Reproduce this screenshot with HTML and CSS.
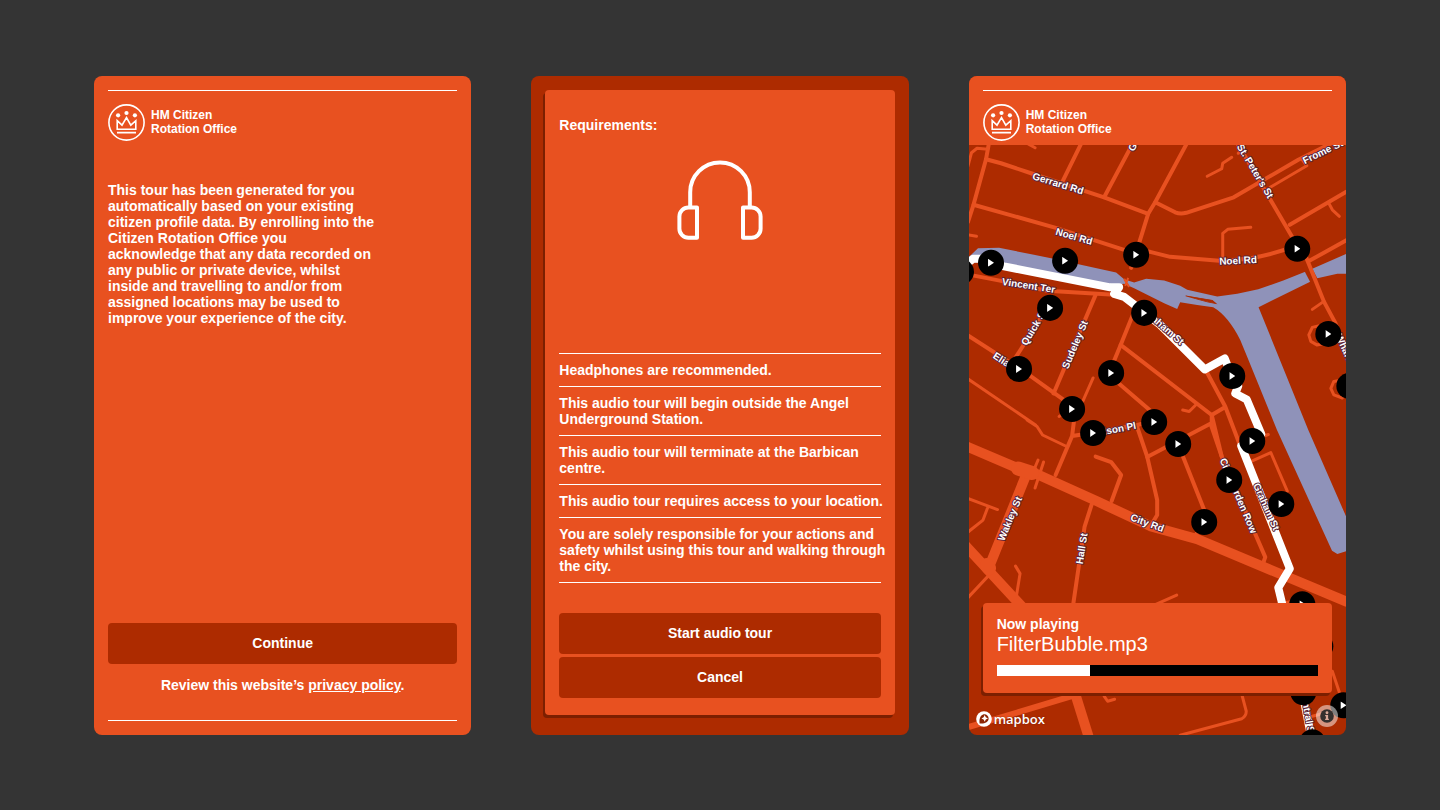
FILE: index.html
```
<!DOCTYPE html>
<html lang="en">
<head>
<meta charset="utf-8">
<meta name="viewport" content="width=device-width, initial-scale=1">
<title>HM Citizen Rotation Office</title>
<link rel="stylesheet" href="styles.css">
</head>
<body>
<svg class="sprite" aria-hidden="true">
  <symbol id="crown" viewBox="0 0 37 37">
    <g fill="none" stroke="#fff" stroke-width="1.6">
      <circle cx="18.5" cy="18.5" r="17.6"/>
      <path d="M9.2 16.7V25.2H27.8V16.7L22.8 21.2L18.5 13.6L14 21.2Z"/>
      <path d="M9 28.6H28"/>
    </g>
    <g fill="#fff"><circle cx="10.1" cy="11.3" r="2.1"/><circle cx="18.5" cy="9" r="2.1"/><circle cx="26.9" cy="11.3" r="2.1"/></g>
  </symbol>
</svg>

<main class="screens">
  <section class="screen intro">
    <header class="brand">
      <svg class="brand-mark" aria-hidden="true"><use href="#crown"/></svg>
      <span class="brand-name">HM Citizen<br>Rotation Office</span>
    </header>
    <p class="intro-text">This tour has been generated for you automatically based on your existing citizen profile data. By enrolling into the Citizen Rotation Office you acknowledge that any data recorded on any public or private device, whilst inside and travelling to and/or from assigned locations may be used to improve your experience of the city.</p>
    <footer class="intro-footer">
      <button class="button" type="button">Continue</button>
      <p class="privacy">Review this website’s <a href="#privacy">privacy policy</a>.</p>
    </footer>
  </section>

  <section class="screen requirements">
    <div class="panel sheet">
      <h2 class="title">Requirements:</h2>
      <svg class="headphones" viewBox="0 0 86 80" fill="none" stroke="#fff" stroke-width="4" stroke-linejoin="round" aria-hidden="true">
        <path d="M13.2 47V32.2A29.8 29.8 0 0 1 72.8 32.2V47"/>
        <path d="M20 47.5H11.5A9 9 0 0 0 2.4 56.5V68.7A9 9 0 0 0 11.5 77.7H20Z"/>
        <path d="M66 47.5H74.5A9 9 0 0 1 83.6 56.5V68.7A9 9 0 0 1 74.5 77.7H66Z"/>
      </svg>
      <ul class="list">
        <li><p>Headphones are recommended.</p></li>
        <li><p>This audio tour will begin outside the Angel Underground Station.</p></li>
        <li><p>This audio tour will terminate at the Barbican centre.</p></li>
        <li><p>This audio tour requires access to your location.</p></li>
        <li><p>You are solely responsible for your actions and safety whilst using this tour and walking through the city.</p></li>
      </ul>
      <div class="actions">
        <button class="button" type="button">Start audio tour</button>
        <button class="button" type="button">Cancel</button>
      </div>
    </div>
  </section>

  <section class="screen tour">
    <div class="tour-header">
      <header class="brand">
        <svg class="brand-mark" aria-hidden="true"><use href="#crown"/></svg>
        <span class="brand-name">HM Citizen<br>Rotation Office</span>
      </header>
    </div>
    <div class="map">
      <svg class="map-canvas" viewBox="969 145 377 590" preserveAspectRatio="xMidYMid slice">
        <!-- canal and basin -->
        <path class="water" d="M968 258L978 248.300L999 248L1051 258.300L1116 272.700L1124 279.300L1134 282.700L1146 279L1164 280.700L1180 286L1187 290L1217 296.700L1237 294L1258 289.300L1283 280.700L1308 270.700L1346 254V274H1337L1317 278.300L1258.300 307.300L1308 430L1346 517V551L1337 554L1331.700 550.700L1276.700 430L1247 357L1240 340Q1228 316 1213 307.300L1197 305L1180 302.300L1177 309L1164 303.300L1134 288.300L1124 284L1110 286L1004 264L968 262Z"/>
        <path class="islet" d="M1185.500 296L1200 298.500L1212 300.500L1215.500 303.500L1207 302L1198 299.500Z"/>
        <path class="lock" d="M1124 279L1129 287M1128 278L1125 286"/>
        <path class="bridge" d="M1306 266L1319 291"/>

        <!-- minor streets -->
        <g class="road lane">
          <path d="M968 166L971.500 153L977 148.500L988 149.500"/>
          <path d="M1026 143L1035 148"/>
          <path d="M968 235L976.500 236.500"/>
          <path d="M1270 187.500L1306.500 166L1302 160"/>
          <path d="M1207 176.500L1221.500 169L1222.500 163.500L1231.500 157.500M1238 153.500L1242 150.500"/>
          <path d="M1328.500 203.500L1332 210L1339 216.500"/>
          <path d="M1222.500 259V233.500L1227.500 229.500L1250.500 227.500"/>
          <path d="M1323.500 301.500L1312 309.500"/>
          <path d="M1318 326L1312 327.500L1308.500 335L1310.500 341.500L1316.500 345L1322 344"/>
          <path d="M1342 380L1333.500 381.500L1330.500 388.500L1333.500 395L1342 398"/>
          <path d="M968 379L1035.500 425M1027 420L1037 426.500L1042.500 435L1065.500 446"/>
          <path d="M1093 378L1082 403M1059 416.500L1071 409"/>
          <path d="M1182.500 410L1189 411.500L1196.500 404"/>
          <path d="M1251.500 461L1270.500 452.500L1287 491M1255 439L1268 434.500"/>
          <path d="M1038 460L1033 472M1043.500 462L1035 488"/>
          <path d="M968 498.500L997.500 509.500M987.500 508L983 520L968 532"/>
          <path d="M989 575L968 597.500"/>
          <path d="M1015.500 566L1020 573.500L1016.500 595"/>
          <path d="M1154 605L1176.500 595M1273 605L1292 601"/>
          <path d="M1104 696L1107.500 701L1114.500 699"/>
          <path d="M1241.500 694L1246 711Q1246 716 1241.500 718.500L1180 735"/>
          <path d="M1332 671L1340 695M1312 716L1331 711"/>
        </g>
        <!-- streets -->
        <g class="road street">
          <path d="M989 143L986 159.500L973.500 205L968 222"/>
          <path d="M986 159.500L1001 163.500L1031 173.500L1104 197.500L1148 214"/>
          <path d="M1081.500 143L1062.500 181.500M1133 143L1104 197.500"/>
          <path d="M973.500 205L1057.500 228.500L1124 250L1150 252L1170 257L1219 261Q1262 260 1297 245"/>
          <path d="M1187 143L1155 202.500L1148 214L1139 243L1131 268"/>
          <path d="M1155 202.500L1175 212.500Q1180 214.500 1186 213L1233.500 197.500L1298 160L1346 136"/>
          <path d="M1238 145L1297 246L1306 258L1323.500 301.500L1335 323L1348 358"/>
          <path d="M1289.500 225L1346 192M1309 261L1346 240.500"/>
          <path d="M970 275L1001 281L1047 291L1064 292L1114 295"/>
          <path d="M1044 313L1014 360M1095.500 295L1053.500 393.500"/>
          <path d="M968 335.500L1024 371.500L1072 406"/>
          <path d="M1132 316.500L1120.500 345L1111 368"/>
          <path d="M1120.500 345L1211.500 415L1221.500 456.500"/>
          <path d="M1071 408L1074 420L1072 436L1055.500 475M1072 436L1092 433L1137 425L1153 421"/>
          <path d="M1110 376L1153 413"/>
          <path d="M1206 371L1225 406.500L1240 446M1225 407L1211.500 415V423L1147 457"/>
          <path d="M1210.500 424L1221.500 456.500L1265 557L1261.500 567"/>
          <path d="M1181 452L1204 510M1203 522L1195 536"/>
          <path d="M1137 427L1147 456.500L1157 500V515L1151 525"/>
          <path d="M1095.500 456.500L1111 462L1121 475L1111.500 501"/>
          <path d="M1092.500 501.500L1084.500 526.500L1073 605"/>
        </g>
        <!-- main roads -->
        <g class="road avenue">
          <path d="M968 447L1014 466.500L1031 471.500L1097.500 501.500L1150 526L1197 539L1346 601.500"/>
          <path d="M1026 475L989 567M966 546L1028 613"/>
          <path d="M1074 690L1089 738"/>
        </g>
        <path class="road junction" d="M1018 468.500L1032 473M987 565L989 568"/>
        <path class="road link" d="M968 727L1075 695"/>

        <!-- walking route -->
        <path class="route" d="M968 263L973 259H982L990 263L1004 266.500L1110 287.500H1119L1114 294L1124 297L1137 307L1160 325L1204.500 369.500L1224.500 358.500L1231 375L1238 386L1235 393.500L1246.500 399.500L1261 434L1252 441L1241 446L1289.500 568.500L1278 587.500L1282 604"/>
        <path class="route" d="M1302 692L1311 737"/>

        <!-- street names -->
        <g class="labels">
          <text transform="translate(1057 187) rotate(17)">Gerrard Rd</text>
          <text transform="translate(1073 240) rotate(16)">Noel Rd</text>
          <text transform="translate(1238 264) rotate(-3)">Noel Rd</text>
          <text transform="translate(1028 289) rotate(9)">Vincent Ter</text>
          <text transform="translate(1078 346) rotate(-67)">Sudeley St</text>
          <text transform="translate(1037 329) rotate(-59)">Quick St</text>
          <text transform="translate(1005 366) rotate(33)">Elia St</text>
          <text transform="translate(1161 329) rotate(41)">Graham St</text>
          <text transform="translate(1344 356) rotate(66)">Wharf Rd</text>
          <text transform="translate(1114 433) rotate(-11)">Nelson Pl</text>
          <text transform="translate(1013 520) rotate(-67)">Wakley St</text>
          <text transform="translate(1085 549) rotate(-81)">Hall St</text>
          <text transform="translate(1146 526) rotate(20)">City Rd</text>
          <text transform="translate(1235 497) rotate(67)">City Garden Row</text>
          <text transform="translate(1263 508) rotate(66)">Graham St</text>
          <text transform="translate(1252 173) rotate(59)">St. Peter's St</text>
          <text transform="translate(1324 155) rotate(-26)">Frome St</text>
          <text transform="translate(1147 127) rotate(-62)">Grantbridge</text>
          <text transform="translate(1304 713) rotate(80)">Central St</text>
        </g>

        <foreignObject x="969" y="145" width="377" height="590">
          <div class="pins">
            <button class="pin" aria-label="Play stop 1" style="left:-8px;top:127px"></button>
            <button class="pin" aria-label="Play stop 2" style="left:22px;top:118px"></button>
            <button class="pin" aria-label="Play stop 3" style="left:96px;top:116px"></button>
            <button class="pin" aria-label="Play stop 4" style="left:167px;top:110px"></button>
            <button class="pin" aria-label="Play stop 5" style="left:328px;top:104px"></button>
            <button class="pin" aria-label="Play stop 6" style="left:81px;top:163px"></button>
            <button class="pin" aria-label="Play stop 7" style="left:175px;top:168px"></button>
            <button class="pin" aria-label="Play stop 8" style="left:359px;top:189px"></button>
            <button class="pin" aria-label="Play stop 9" style="left:50px;top:224px"></button>
            <button class="pin" aria-label="Play stop 10" style="left:142px;top:228px"></button>
            <button class="pin" aria-label="Play stop 11" style="left:263px;top:231px"></button>
            <button class="pin" aria-label="Play stop 12" style="left:380px;top:241px"></button>
            <button class="pin" aria-label="Play stop 13" style="left:103px;top:264px"></button>
            <button class="pin" aria-label="Play stop 14" style="left:124px;top:288px"></button>
            <button class="pin" aria-label="Play stop 15" style="left:185px;top:277px"></button>
            <button class="pin" aria-label="Play stop 16" style="left:209px;top:299px"></button>
            <button class="pin" aria-label="Play stop 17" style="left:283px;top:296px"></button>
            <button class="pin" aria-label="Play stop 18" style="left:260px;top:335px"></button>
            <button class="pin" aria-label="Play stop 19" style="left:312px;top:359px"></button>
            <button class="pin" aria-label="Play stop 20" style="left:235px;top:377px"></button>
            <button class="pin" aria-label="Play stop 21" style="left:333px;top:459px"></button>
            <button class="pin" aria-label="Play stop 22" style="left:351px;top:501px"></button>
            <button class="pin" aria-label="Play stop 23" style="left:334px;top:547px"></button>
            <button class="pin" aria-label="Play stop 24" style="left:374px;top:560px"></button>
            <button class="pin" aria-label="Play stop 25" style="left:343px;top:597px"></button>
          </div>
        </foreignObject>
      </svg>

      <div class="map-overlay">
        <div class="panel player">
          <label class="title" for="track">Now playing</label>
          <span class="track-name">FilterBubble.mp3</span>
          <progress class="track" id="track" value="29" max="100"></progress>
        </div>
        <div class="attribution">
          <a class="mapbox" href="#mapbox">
            <svg class="mapbox-mark" viewBox="0 0 16 16" aria-hidden="true">
              <circle cx="8" cy="8" r="7.800" fill="#fff"/>
              <path d="M3.600 12.400C3 8.500 4 5 6.700 3.700C9.500 2.500 12.600 4.500 12.600 7.500C12.600 11.500 8 13 3.600 12.400Z" fill="#8c2605"/>
              <path d="M8.700 4L9.800 6.300L12 7.400L9.800 8.500L8.700 10.800L7.600 8.500L5.400 7.400L7.600 6.300Z" fill="#fff"/>
            </svg>
            <span>mapbox</span>
          </a>
          <button class="info" type="button" aria-label="About this map">
            <svg class="info-icon" viewBox="0 0 20 20" aria-hidden="true">
              <circle cx="10" cy="10" r="6.200" fill="#35302e"/>
              <circle cx="10" cy="7" r="1.300" fill="#d9a898"/>
              <path d="M8.300 9H11V12.500H11.700V13.700H8.300V12.500H9V10.200H8.300Z" fill="#d9a898"/>
            </svg>
          </button>
        </div>
      </div>
    </div>
  </section>
</main>
</body>
</html>
```
FILE: styles.css
```
:root {
  --orange: #e85120;
  --rust: #ad2b00;
  --shadow: #7c1f00;
}

* { box-sizing: border-box; }

body {
  margin: 0;
  background: #343434;
  color: #fff;
  font: bold 14px/16px "Liberation Sans", Arial, sans-serif;
}

p, h2, ul { margin: 0; padding: 0; }

button { font: inherit; color: inherit; border: 0; cursor: pointer; }

.sprite { display: none; }

.screens {
  display: grid;
  grid-template-columns: repeat(3, 1fr);
  gap: 60px;
  min-height: 100vh;
  padding: 76px 94px 75px;
}

.screen {
  display: flex;
  flex-direction: column;
  border-radius: 8px;
  background: var(--orange);
  overflow: hidden;
}

.brand {
  display: flex;
  align-items: center;
  gap: 6px;
  padding-top: 13px;
  border-top: 1px solid #fff;
}

.brand-mark { width: 37px; height: 37px; flex: none; }

.brand-name { padding-bottom: 2px; font-size: 12px; line-height: 14px; }

.button {
  display: block;
  width: 100%;
  padding: 12px;
  line-height: 17px;
  border-radius: 4px;
  background: var(--rust);
}

.panel {
  padding: 14px;
  border-radius: 4px;
  background: var(--orange);
  box-shadow: -2px 3px 0 var(--shadow);
}

.title { font-size: 14px; line-height: 16px; }

/* Introduction */
.intro { padding: 14px; }

.intro-text { max-width: 268px; margin-top: 41px; }

.intro-footer { margin-top: auto; border-bottom: 1px solid #fff; }

.privacy { padding: 13px 0 27px; text-align: center; }

.privacy a { color: inherit; }

/* Requirements */
.requirements { padding: 14px 14px 20px; background: var(--rust); }

.sheet { display: flex; flex-direction: column; flex: 1; padding: 27px 14px 17px; }

.headphones { width: 86px; height: 80px; margin: 27px auto; }

.list {
  margin-top: auto;
  list-style: none;
  border-top: 1px solid #fff;
}

.list li { padding: 8px 0; border-bottom: 1px solid #fff; }

/* Lets long lines run slightly past the rules, into the panel's padding */
.list p { margin-right: -10px; }

.actions { display: grid; gap: 3px; margin-top: 30px; }

/* Tour map */
.tour { background: var(--rust); }

.tour-header { padding: 14px 14px 4px; background: var(--orange); }

.map { display: flex; flex: 1; position: relative; overflow: hidden; }

.map-canvas { position: absolute; inset: 0; width: 100%; height: 100%; }

.map-overlay {
  position: relative;
  display: flex;
  flex-direction: column;
  justify-content: flex-end;
  flex: 1;
  pointer-events: none;
}

.map-overlay > * { pointer-events: auto; }

.water { fill: #8f92b9; }
.islet { fill: var(--rust); stroke: var(--rust); stroke-width: 1; }
.lock { fill: none; stroke: var(--orange); stroke-width: 2; }
.bridge { fill: none; stroke: var(--rust); stroke-width: 8; }

.road { fill: none; stroke: var(--orange); stroke-linecap: round; stroke-linejoin: round; }
.lane { stroke-width: 3; }
.street { stroke-width: 4; }
.link { stroke-width: 6; }
.avenue { stroke-width: 10; }
.junction { stroke-width: 14; }

.route { fill: none; stroke: #fff; stroke-width: 8; stroke-linejoin: round; }

.labels {
  fill: #fff;
  stroke: #5a2436;
  stroke-width: 2;
  stroke-linejoin: round;
  paint-order: stroke;
  font-size: 10px;
  text-anchor: middle;
}

.pins { position: relative; width: 100%; height: 100%; }

.pin {
  position: absolute;
  width: 26px;
  height: 26px;
  margin: -13px;
  padding: 0;
  border-radius: 50%;
  background: #000;
}

.pin::before {
  content: "";
  display: block;
  width: 6px;
  height: 8px;
  margin: 0 auto;
  background: #fff;
  clip-path: polygon(0 0, 100% 50%, 0 100%);
}

.player { display: grid; margin: 0 14px; padding-top: 13px; }

.track-name { font-size: 20px; line-height: 24px; font-weight: normal; }

.track {
  display: block;
  width: 100%;
  height: 11px;
  margin: 9px 0 3px;
  border: 0;
  appearance: none;
  background: #000;
}

.track::-webkit-progress-bar { background: #000; }
.track::-webkit-progress-value { background: #fff; }
.track::-moz-progress-bar { background: #fff; }

.attribution {
  display: flex;
  align-items: center;
  justify-content: space-between;
  padding: 12px 8px 8px 7px;
}

.mapbox {
  display: flex;
  align-items: center;
  gap: 2px;
  padding-top: 6px;
  color: inherit;
  font: 600 13px/16px "Open Sans", sans-serif;
  text-decoration: none;
  text-shadow: 0 0 2px var(--shadow);
}

.mapbox-mark { width: 16px; height: 16px; }

.info {
  width: 22px;
  height: 22px;
  padding: 0;
  border-radius: 50%;
  background: rgba(255, 255, 255, 0.5);
}

.info-icon { display: block; width: 22px; height: 22px; }
```
